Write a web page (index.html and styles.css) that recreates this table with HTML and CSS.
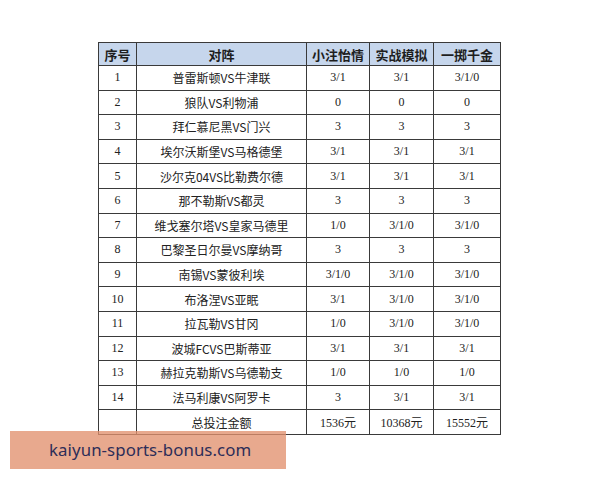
FILE: index.html
```html
<!DOCTYPE html>
<html lang="zh">
<head>
<meta charset="utf-8">
<title>投注表</title>
<link rel="stylesheet" href="styles.css">
</head>
<body>
<div class="page">
  <div class="wrap">
    <table class="bets">
      <colgroup>
        <col class="c-no"><col class="c-match"><col class="c-a"><col class="c-b"><col class="c-c">
      </colgroup>
      <thead>
        <tr><th>序号</th><th>对阵</th><th>小注怡情</th><th>实战模拟</th><th>一掷千金</th></tr>
      </thead>
      <tbody>
        <tr><td>1</td><td>普雷斯顿VS牛津联</td><td>3/1</td><td>3/1</td><td>3/1/0</td></tr>
        <tr><td>2</td><td>狼队VS利物浦</td><td>0</td><td>0</td><td>0</td></tr>
        <tr><td>3</td><td>拜仁慕尼黑VS门兴</td><td>3</td><td>3</td><td>3</td></tr>
        <tr><td>4</td><td>埃尔沃斯堡VS马格德堡</td><td>3/1</td><td>3/1</td><td>3/1</td></tr>
        <tr><td>5</td><td>沙尔克04VS比勒费尔德</td><td>3/1</td><td>3/1</td><td>3/1</td></tr>
        <tr><td>6</td><td>那不勒斯VS都灵</td><td>3</td><td>3</td><td>3</td></tr>
        <tr><td>7</td><td>维戈塞尔塔VS皇家马德里</td><td>1/0</td><td>3/1/0</td><td>3/1/0</td></tr>
        <tr><td>8</td><td>巴黎圣日尔曼VS摩纳哥</td><td>3</td><td>3</td><td>3</td></tr>
        <tr><td>9</td><td>南锡VS蒙彼利埃</td><td>3/1/0</td><td>3/1/0</td><td>3/1/0</td></tr>
        <tr><td>10</td><td>布洛涅VS亚眠</td><td>3/1</td><td>3/1/0</td><td>3/1/0</td></tr>
        <tr><td>11</td><td>拉瓦勒VS甘冈</td><td>1/0</td><td>3/1/0</td><td>3/1/0</td></tr>
        <tr><td>12</td><td>波城FCVS巴斯蒂亚</td><td>3/1</td><td>3/1</td><td>3/1</td></tr>
        <tr><td>13</td><td>赫拉克勒斯VS乌德勒支</td><td>1/0</td><td>1/0</td><td>1/0</td></tr>
        <tr><td>14</td><td>法马利康VS阿罗卡</td><td>3</td><td>3/1</td><td>3/1</td></tr>
        <tr><td></td><td>总投注金额</td><td>1536元</td><td>10368元</td><td>15552元</td></tr>
      </tbody>
    </table>
  </div>
  <div class="banner">kaiyun-sports-bonus.com</div>
</div>
</body>
</html>
```
FILE: styles.css
```css
html, body {
  margin: 0;
  padding: 0;
  background: #fff;
}
.page {
  position: relative;
  width: 600px;
  height: 480px;
  overflow: hidden;
}
.wrap {
  padding: 42px 0 0 98px;
}
.bets {
  border-collapse: collapse;
  table-layout: fixed;
  width: 402px;
  font-family: "Liberation Serif", "Noto Sans CJK SC", serif;
  font-size: 12px;
  color: #222;
}
.c-no { width: 38px; }
.c-match { width: 170px; }
.c-a { width: 63px; }
.c-b { width: 64px; }
.c-c { width: 67px; }
.bets th, .bets td {
  border: 1px solid #3a3a3a;
  text-align: center;
  padding: 0;
  white-space: nowrap;
}
.bets th {
  height: 22px;
  background: #c6d6ec;
  font-family: "Noto Sans CJK SC", sans-serif;
  font-weight: bold;
  font-size: 13px;
  color: #1e1e1e;
}
.bets td {
  height: 23.6px;
}
.bets td:nth-child(2) {
  font-family: "Noto Sans CJK SC", sans-serif;
  font-size: 12px;
}
.banner {
  position: absolute;
  left: 10px;
  top: 431px;
  width: 276px;
  height: 38px;
  background: rgba(225, 145, 110, 0.78);
  color: #2d2d58;
  font-family: "Noto Sans", sans-serif;
  font-size: 16.8px;
  letter-spacing: 0.1px;
  line-height: 38px;
  padding-left: 39px;
  box-sizing: border-box;
}
```
